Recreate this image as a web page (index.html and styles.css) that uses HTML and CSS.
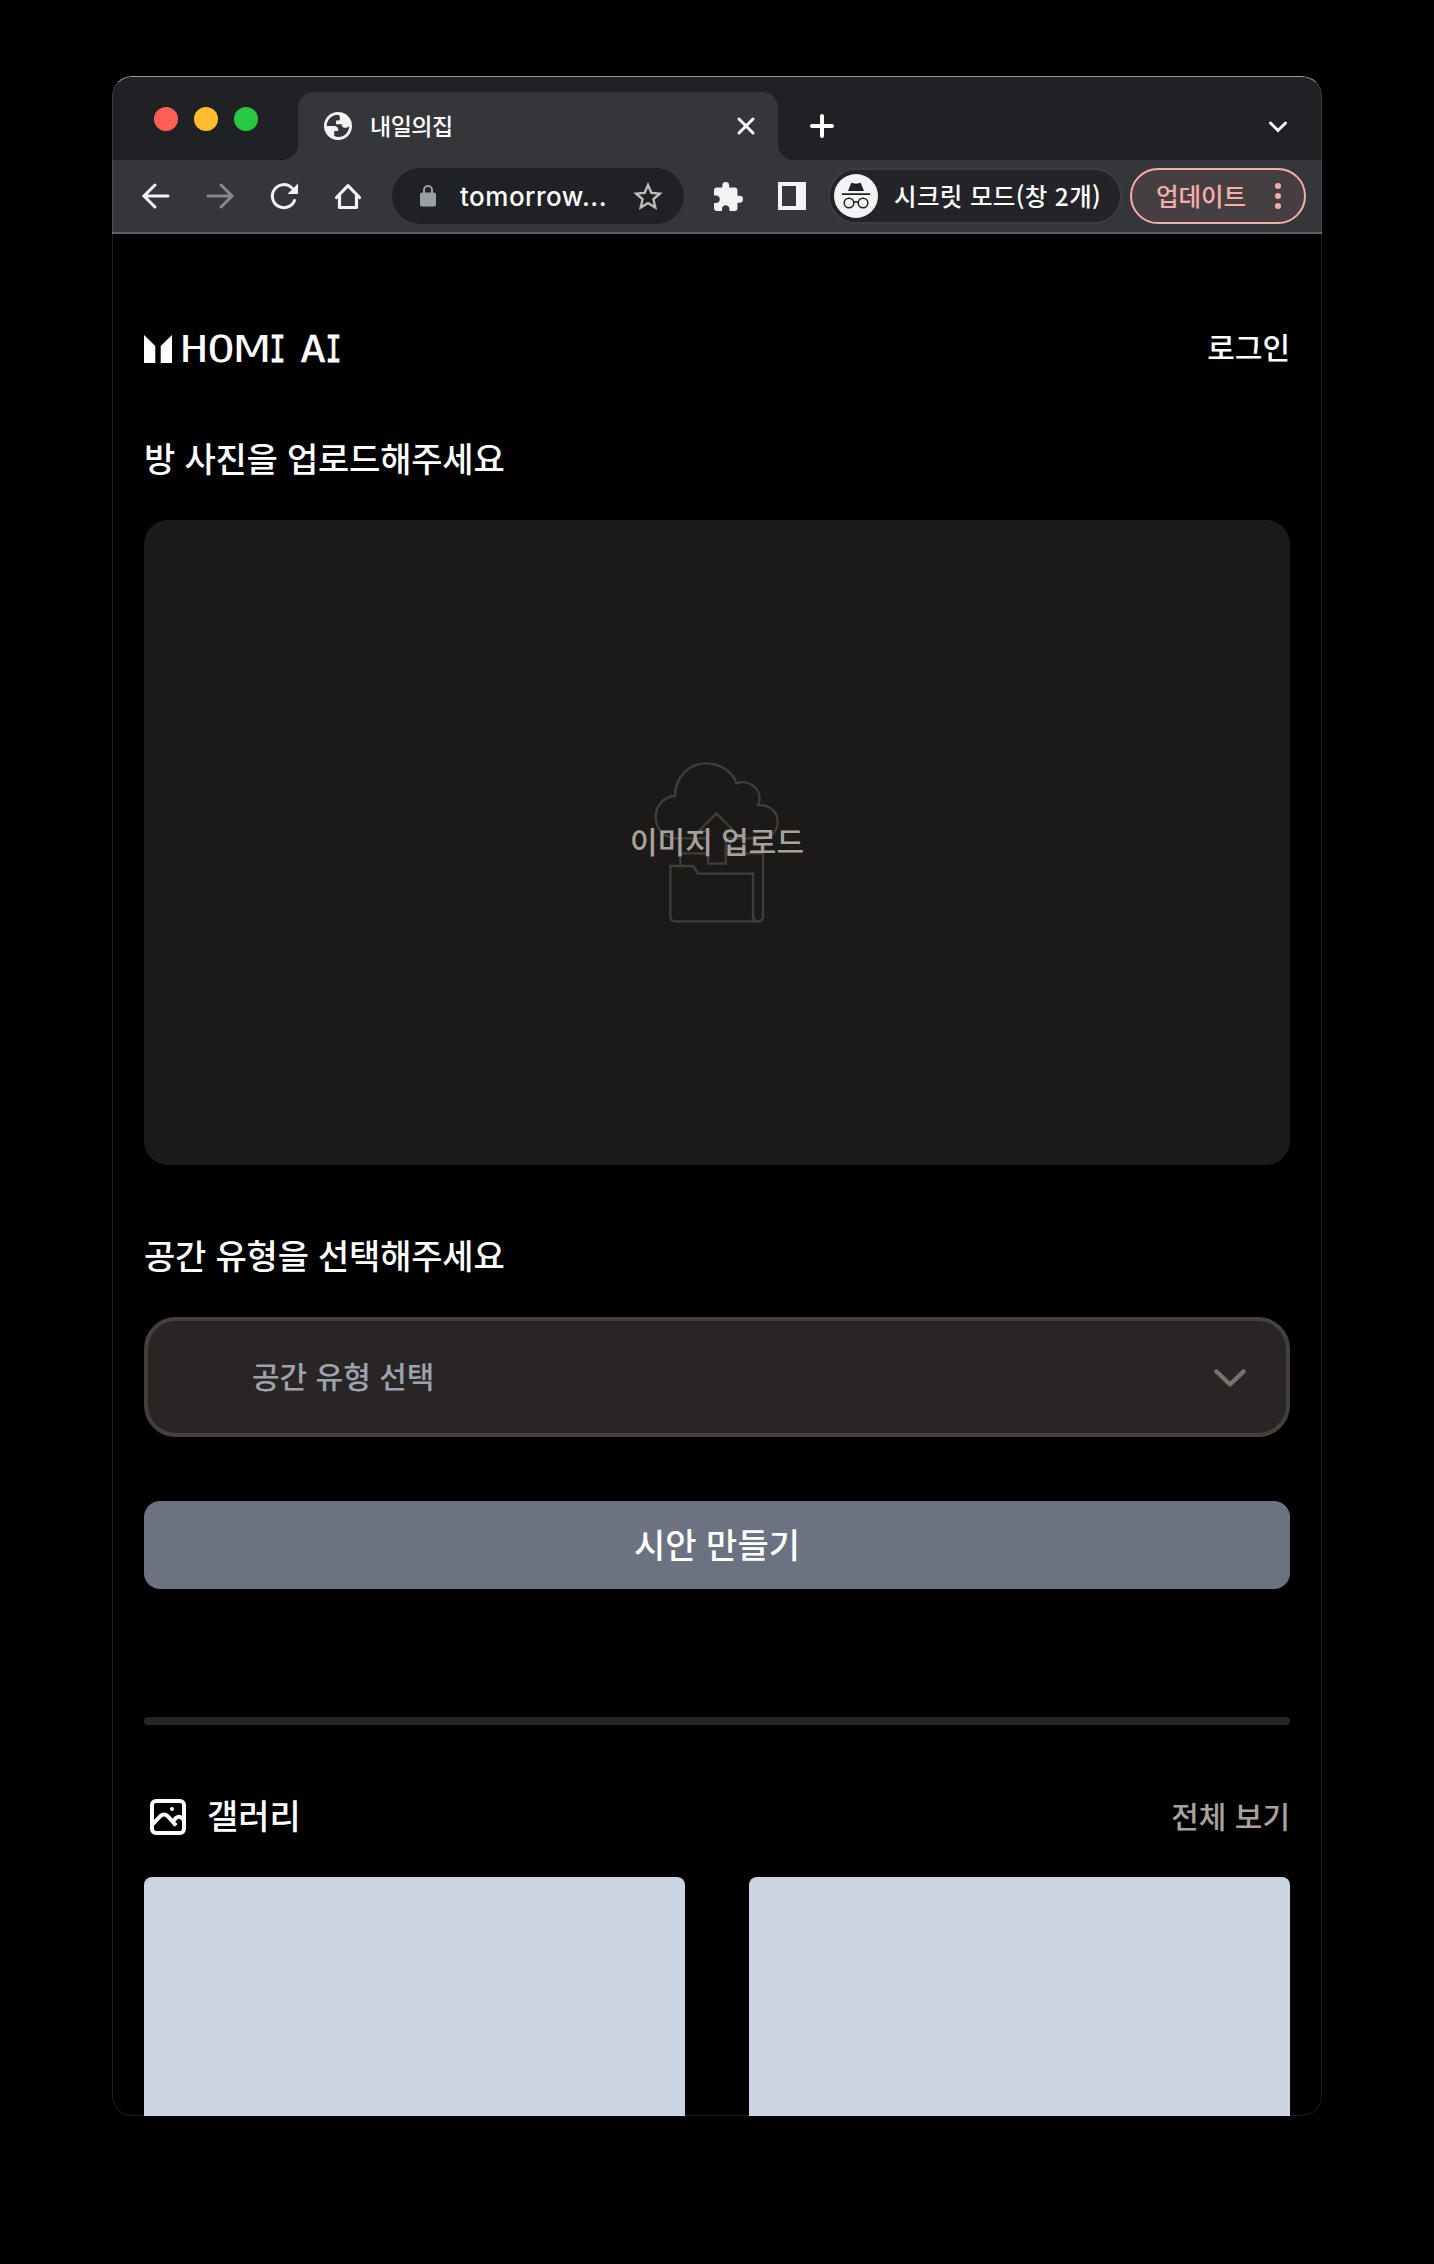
FILE: index.html
```html
<!DOCTYPE html>
<html lang="ko">
<head>
<meta charset="utf-8">
<title>내일의집</title>
<link rel="stylesheet" href="styles.css">
</head>
<body>
<div class="window">
  <div class="tabstrip">
    <div class="lights"><i class="light red"></i><i class="light yellow"></i><i class="light green"></i></div>
    <div class="tab">
      <svg class="globe" viewBox="2 2 20 20"><circle cx="12" cy="12" r="10" fill="#f1f3f4"/><path fill="#35363a" d="M12.300 4C8.500 4 5.400 6.300 4.300 9.700 3.900 10.800 4 11.800 4 12h5.200c1.800 0 3 1 3 2.700v.8H9.300v3.700c4.600 2 9.300-.700 10.500-5.400.200-.800.200-1.500.200-1.800-.700.800-1.500 1.300-2.700 1.300-1.700 0-2.700-1-2.700-2.600h-4V8.100h1.600c.8 0 1.100-.500 1.100-1.200V5.200z"/></svg>
      <span class="tab-title">내일의집</span>
      <svg class="tab-close" viewBox="0 0 20 20"><path d="M3 3 17 17M17 3 3 17"/></svg>
    </div>
    <svg class="new-tab" viewBox="0 0 24 24"><path d="M12 2V22M2 12H22"/></svg>
    <svg class="tab-menu" viewBox="0 0 20 12"><path d="M2.500 2 10 9.500 17.500 2"/></svg>
  </div>
  <div class="toolbar">
    <svg class="nav" viewBox="0 0 64 32"><path d="M44 16H21M31 5 20 16 31 27"/></svg>
    <svg class="nav dim" viewBox="0 0 64 32"><path d="M20 16H43M33 5 44 16 33 27"/></svg>
    <svg class="nav" viewBox="0 0 64 32"><path d="M42.500 20.500A11.500 11.500 0 1 1 40 8"/><path class="solid" d="M46 3.500V14H35.500Z"/></svg>
    <svg class="nav home" viewBox="0 0 64 32"><path d="M20.500 17.500 32 5.700 43.500 17.500M23.500 15V27.500H40.500V15"/></svg>
    <div class="omnibox">
      <svg class="lock" viewBox="0 0 16 22"><rect x="0" y="7.500" width="16" height="14" rx="2"/><path d="M4 8V5a4 4 0 0 1 8 0V8"/></svg>
      <span class="url">tomorrow...</span>
      <svg class="star" viewBox="2 2 20 19"><path d="m22 9.240-7.190-.620L12 2 9.190 8.630 2 9.240l5.460 4.730L5.820 21 12 17.270 18.180 21l-1.630-7.030zM12 15.400l-3.760 2.270 1-4.280-3.320-2.880 4.380-.380L12 6.100l1.710 4.040 4.380.380-3.320 2.880 1 4.280z"/></svg>
    </div>
    <svg class="puzzle" viewBox="2 1 21 21"><path d="M20.500 11H19V7c0-1.100-.900-2-2-2h-4V3.500a2.500 2.500 0 0 0-5 0V5H4c-1.100 0-1.990.900-1.990 2v3.800H3.500c1.490 0 2.700 1.210 2.700 2.700s-1.210 2.700-2.700 2.700H2V20c0 1.100.900 2 2 2h3.800v-1.500c0-1.490 1.210-2.700 2.700-2.700s2.700 1.210 2.700 2.700V22H17c1.100 0 2-.900 2-2v-4h1.500a2.500 2.500 0 0 0 0-5z"/></svg>
    <svg class="panel" viewBox="0 0 28 28"><path d="M0 0H28V28H0ZM4 4V24H18V4Z"/></svg>
    <div class="incognito">
      <svg viewBox="0 0 44 44"><circle cx="22" cy="22" r="22" fill="#f1f3f4"/><path fill="#202124" d="M14 17 17 9.500Q17.500 8.500 18.800 9 22 10.300 25.200 9 26.500 8.500 27 9.500L30 17ZM8 19.300H36V21H8Z"/><g fill="none" stroke="#202124" stroke-width="1.500"><circle cx="15" cy="29" r="4.800"/><circle cx="29" cy="29" r="4.800"/><path d="M19.800 28.500Q22 27 24.200 28.500"/></g></svg>
      <span>시크릿 모드(창 2개)</span>
    </div>
    <div class="update">
      <span>업데이트</span>
      <svg viewBox="0 0 6 26"><circle cx="3" cy="3" r="3"/><circle cx="3" cy="13" r="3"/><circle cx="3" cy="23" r="3"/></svg>
    </div>
  </div>
  <main class="page">
    <header class="header">
      <div class="logo">
        <svg viewBox="0 0 28 28"><path d="M0 0 11.300 11V28H0ZM28 0 16.700 11V28H28Z"/></svg>
        <div class="wordmark"><span class="h">H</span><span class="o">O</span><span class="m">M</span><span class="i">I</span> <span class="a">A</span><span class="i last">I</span></div>
      </div>
      <a class="login">로그인</a>
    </header>
    <h2 class="heading">방 사진을 업로드해주세요</h2>
    <div class="upload">
      <svg viewBox="160 65 380 490"><path d="M230 297C194 297 168 267 168 233 168 199 194 171 226 170 226 112 270 72 320 72 362 72 398 98 411 132 447 118 494 150 475 198 512 194 534 220 534 248 534 275 512 297 485 297H378M325 297H230M325 275V373H378V275H403L350 222 297 275ZM242 380V342H325M378 342H490V530Q490 546 475 546T460 530V403H295L280 380H212V530Q212 546 228 546H475"/></svg>
      <span>이미지 업로드</span>
    </div>
    <h2 class="heading second">공간 유형을 선택해주세요</h2>
    <div class="select">
      <span>공간 유형 선택</span>
      <svg viewBox="0 0 32 18"><path d="M2.500 2.500 16 15.500 29.500 2.500"/></svg>
    </div>
    <button class="submit">시안 만들기</button>
    <div class="divider"></div>
    <div class="gallery-head">
      <svg viewBox="0 0 36 36"><rect x="2" y="2" width="32" height="32" rx="4"/><path d="M2 26 10.500 17Q14 14 17.500 17L26 26.500M22.500 22.500 26 19Q29 16.500 32 19L34 21"/><circle cx="22" cy="10" r="2"/></svg>
      <span class="gallery-title">갤러리</span>
      <a class="all">전체 보기</a>
    </div>
    <div class="cards"><div class="card"></div><div class="card"></div></div>
  </main>
</div>
</body>
</html>
```
FILE: styles.css
```css
* { box-sizing: border-box; }
body {
  margin: 0;
  padding: 76px 112px 148px;
  background: #000;
  color: #fff;
  font-family: "Noto Sans CJK KR", sans-serif;
  font-weight: 500;
}
svg { display: block; flex: none; }
span, a { white-space: nowrap; }

.window {
  position: relative;
  display: flex;
  flex-direction: column;
  width: 1210px;
  height: 2040px;
  border-radius: 20px;
  overflow: hidden;
}
.window::after {
  content: "";
  position: absolute;
  inset: 0;
  border: 1px solid rgba(255, 255, 255, .12);
  border-top-color: rgba(255, 255, 255, .55);
  border-radius: 20px;
  pointer-events: none;
}

/* browser chrome */
.tabstrip {
  display: flex;
  flex: none;
  height: 84px;
  padding: 16px 34px 0 42px;
  background: #202124;
}
.lights { display: flex; gap: 16px; width: 144px; padding-top: 15px; }
.light { width: 24px; height: 24px; border-radius: 50%; }
.red { background: #ff5f57; }
.yellow { background: #febc2e; }
.green { background: #28c840; }
.tab {
  position: relative;
  display: flex;
  align-items: center;
  width: 480px;
  height: 68px;
  padding: 0 22px 0 26px;
  border-radius: 16px 16px 0 0;
  background: #35363a;
}
.tab::before, .tab::after {
  content: "";
  position: absolute;
  bottom: 0;
  width: 16px;
  height: 16px;
}
.tab::before { left: -16px; background: radial-gradient(circle at 0 0, transparent 15.500px, #35363a 16.500px); }
.tab::after { right: -16px; background: radial-gradient(circle at 100% 0, transparent 15.500px, #35363a 16.500px); }
.globe { width: 28px; height: 28px; }
.tab-title { margin-left: 18px; padding-bottom: 3px; font-size: 23px; line-height: 32px; letter-spacing: -.5px; }
.tab-close { width: 20px; height: 20px; margin-left: auto; }
.tab-close path, .new-tab path, .tab-menu path { fill: none; stroke: #fff; stroke-width: 3; stroke-linecap: round; }
.new-tab { width: 24px; height: 24px; margin: 22px 0 0 32px; }
.new-tab path { stroke-width: 4; }
.tab-menu { width: 20px; height: 12px; margin: 29px 0 0 auto; }

.toolbar {
  display: flex;
  flex: none;
  align-items: center;
  height: 74px;
  padding: 0 16px 0 12px;
  background: #35363a;
  border-bottom: 2px solid #5f6063;
}
.nav { width: 64px; height: 32px; fill: none; stroke: #f1f3f4; stroke-width: 3; stroke-linecap: round; }
.nav .solid { fill: #f1f3f4; stroke: none; }
.dim { stroke: #86878a; }
.home { stroke-width: 3.200; stroke-linejoin: round; }
.omnibox {
  display: flex;
  align-items: center;
  width: 292px;
  height: 56px;
  margin-left: 12px;
  padding: 0 21px 0 28px;
  border-radius: 28px;
  background: #202124;
}
.lock { width: 16px; height: 22px; fill: #9aa0a6; }
.lock path { fill: none; stroke: #9aa0a6; stroke-width: 2; }
.url { margin-left: 24px; padding-top: 2px; font: 500 26px/36px Inter, sans-serif; letter-spacing: .5px; }
.star { width: 30px; height: 28px; margin-left: auto; fill: #bdbdbd; }
.puzzle { width: 29px; height: 29px; margin-left: 30px; fill: #f1f3f4; }
.panel { width: 28px; height: 28px; margin-left: 35px; fill: #f1f3f4; fill-rule: evenodd; }
.incognito {
  display: flex;
  align-items: center;
  width: 294px;
  height: 56px;
  margin-left: 22px;
  padding-left: 4px;
  border: 2px solid #3c3c41;
  border-radius: 28px;
  background: #242328;
}
.incognito svg { width: 44px; height: 44px; }
.incognito span { margin-left: 16px; font-size: 24.500px; line-height: 36px; letter-spacing: .35px; }
.update {
  display: flex;
  align-items: center;
  justify-content: space-between;
  width: 176px;
  height: 56px;
  margin-left: auto;
  padding: 0 23px 0 24px;
  border: 2px solid #f6aea9;
  border-radius: 28px;
  background: #463f42;
  color: #f6aea9;
  fill: #f6aea9;
  font-size: 24.500px;
  line-height: 36px;
}
.update svg { width: 6px; height: 26px; }

/* page */
.page {
  display: flex;
  flex: 1;
  flex-direction: column;
  min-height: 0;
  padding: 95px 32px 0;
}
.header { display: flex; justify-content: space-between; align-items: center; height: 40px; }
.logo { display: flex; align-items: center; gap: 11px; }
.logo svg { width: 28px; height: 28px; fill: #fff; }
.wordmark { display: flex; font: 400 38px/40px "DejaVu Sans Mono", monospace; }
.wordmark span { display: flex; justify-content: center; }
.wordmark .h { width: 22px; transform: scaleX(1.200); }
.wordmark .o { width: 22px; margin-left: 5px; transform: scaleX(1.200); }
.wordmark .m { width: 32px; margin-left: 4px; font-family: "DejaVu Sans", sans-serif; transform: scaleX(1.200); }
.wordmark .i { width: 11px; margin-left: 4px; transform: scaleX(.700); -webkit-text-stroke: 1px #fff; }
.wordmark .a { width: 24px; margin-left: 18px; transform: scaleX(1.100); -webkit-text-stroke: .5px #fff; }
.wordmark .last { margin-left: 3px; }
.login, .all { font-size: 30px; line-height: 40px; }
.login { padding-bottom: 6px; }
.heading { margin: 65px 0 38px; font-size: 34px; font-weight: 500; line-height: 48px; letter-spacing: -.2px; }
.second { margin-top: 66px; }
.upload {
  display: grid;
  flex: none;
  place-items: center;
  height: 645px;
  border-radius: 24px;
  background: #1c1a18;
}
.upload > * { grid-area: 1 / 1; }
.upload svg { width: 126.700px; height: 163.300px; margin: 1px 1px 0 0; fill: none; stroke: #403e39; stroke-width: 7; }
.upload span { padding-bottom: 6px; color: #a8a29e; font-size: 30px; line-height: 40px; }
.select {
  display: flex;
  flex: none;
  align-items: center;
  justify-content: space-between;
  height: 120px;
  padding: 0 40px 0 104px;
  border: 4px solid #44403c;
  border-radius: 32px;
  background: #292524;
  color: #9ca3af;
  font-size: 30px;
}
.select span { padding-bottom: 5px; }
.select svg { width: 32px; height: 18px; margin-top: 2px; fill: none; stroke: #78716c; stroke-width: 4.500; stroke-linecap: round; stroke-linejoin: round; }
.submit {
  flex: none;
  height: 88px;
  margin-top: 64px;
  padding: 0 0 4px;
  border: 0;
  border-radius: 16px;
  background: #6b7280;
  color: #fff;
  font: inherit;
  font-size: 34px;
}
.divider { flex: none; height: 8px; margin-top: 128px; border-radius: 4px; background: #292524; }
.gallery-head { display: flex; flex: none; align-items: center; height: 48px; margin-top: 67px; padding-left: 6px; }
.gallery-head svg { width: 36px; height: 36px; margin-top: 2px; fill: none; stroke: #fff; stroke-width: 4; }
.gallery-head circle { fill: #fff; stroke: none; }
.gallery-title { margin-left: 21px; padding-bottom: 2px; font-size: 34px; line-height: 48px; }
.all { margin-left: auto; padding-bottom: 3px; color: #a8a29e; }
.cards { display: grid; flex: 1; grid-template-columns: 1fr 1fr; gap: 64px; margin-top: 37px; }
.card { border-radius: 8px 8px 0 0; background: #cbd5e1; }
```
